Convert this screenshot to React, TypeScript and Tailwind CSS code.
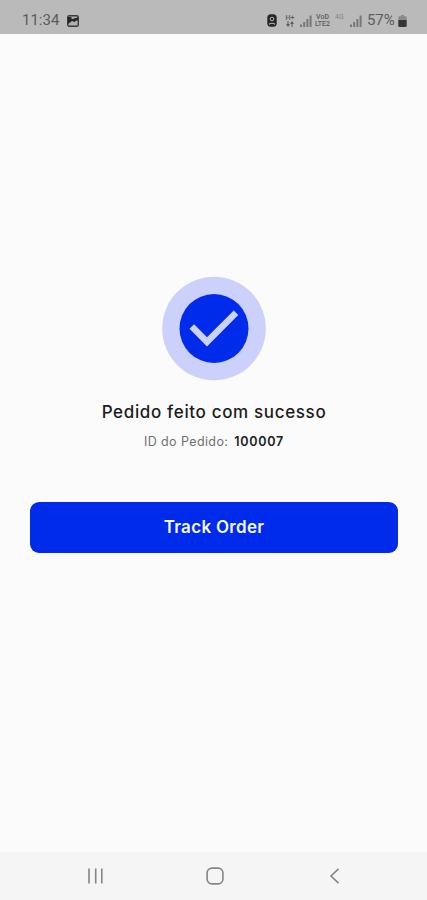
function SignalIcon() {
  return (
    <svg width="12" height="12" viewBox="0 0 12 12" fill="#787878">
      <rect x="0" y="9.5" width="2" height="2.5" />
      <rect x="3.2" y="7" width="2" height="5" />
      <rect x="6.4" y="4" width="2" height="8" />
      <rect x="9.6" y="0.5" width="2" height="11.5" />
    </svg>
  );
}

function StatusBar() {
  return (
    <header className="flex h-[34px] shrink-0 items-center bg-[#bababa] pt-[7px] pl-[22px] pr-[20px] text-[#5c5c5c]">
      <span className="w-[38px] text-[15px] leading-none whitespace-nowrap">11:34</span>
      <svg className="ml-[7px]" width="12" height="12" viewBox="0 0 12 12">
        <rect x="0.7" y="0.7" width="10.6" height="10.6" rx="1.5" fill="#b0b0b0" stroke="#3a3a3a" strokeWidth="1.4" />
        <path d="M1 2h3.5v2H6L8 3h1.5L11 2v3.5H9.5L7.5 7 5 6 1 9z" fill="#262626" />
      </svg>

      <div className="ml-auto flex items-center">
        <svg width="10" height="13" viewBox="0 0 10 13">
          <rect x="0.3" y="0.3" width="9.4" height="12.4" rx="3.5" fill="#262626" />
          <circle cx="5" cy="5" r="1.8" fill="none" stroke="#bababa" strokeWidth="1" />
          <path d="M2 10.3c1.5-1.5 4.5-1.5 6 0" fill="none" stroke="#bababa" strokeWidth="1.1" />
        </svg>
        <div className="ml-[8px] flex w-[10px] flex-col items-center">
          <span className="text-[7px] leading-[6px] font-medium">H+</span>
          <svg width="8" height="6" viewBox="0 0 8 6" fill="#5c5c5c">
            <path d="M1.5 0h1v3H4L2 6 0 3h1.5zM5.5 6h1V3H8L6 0 4 3h1.5z" />
          </svg>
        </div>
        <div className="ml-[5px]">
          <SignalIcon />
        </div>
        <div className="ml-[2px] flex w-[17px] flex-col items-center text-[7px] leading-[7px] font-medium">
          <span>VoD</span>
          <span>LTE2</span>
        </div>
        <span className="ml-[4px] w-[10px] self-start text-[7px] leading-[8px] text-[#858585]">4G</span>
        <div className="ml-[5px]">
          <SignalIcon />
        </div>
        <span className="ml-[5px] w-[30px] text-[15px] leading-none tracking-[-0.1px] whitespace-nowrap">57%</span>
        <svg className="ml-[1px]" width="9" height="12" viewBox="0 0 9 12">
          <path d="M3 0h3v1.2h1.5q1.2 0 1.2 1.2V5H.3V2.4q0-1.2 1.2-1.2H3z" fill="#8b8b8b" />
          <path d="M.3 5h8.4v5.5q0 1.5-1.5 1.5H1.8Q.3 12 .3 10.5z" fill="#353535" />
        </svg>
      </div>
    </header>
  );
}

function NavigationBar() {
  return (
    <nav className="flex h-[48px] shrink-0 items-center justify-between bg-[#f5f5f5] pl-[87px] pr-[84px]">
      <button type="button" aria-label="Recents">
        <svg width="18" height="18" viewBox="0 0 18 18" fill="none" stroke="#858585" strokeWidth="1.6">
          <path d="M2 1.5v15M8.7 1.5v15M14.8 1.5v15" />
        </svg>
      </button>
      <button type="button" aria-label="Home">
        <svg width="18" height="18" viewBox="0 0 18 18" fill="none" stroke="#858585" strokeWidth="1.6">
          <rect x="1.1" y="1.1" width="15.8" height="15.8" rx="4.8" />
        </svg>
      </button>
      <button type="button" aria-label="Back">
        <svg width="18" height="18" viewBox="0 0 18 18" fill="none" stroke="#858585" strokeWidth="1.6">
          <path d="M13.5 1.8 6 9l7.5 7.2" />
        </svg>
      </button>
    </nav>
  );
}

export default function App() {
  return (
    <div className="flex h-[900px] w-full flex-col overflow-hidden bg-[#fbfbfb] font-['Roboto',sans-serif]">
      <StatusBar />

      <main className="flex flex-1 flex-col items-center pt-[242px] pr-[29px] pl-[30px] font-['Inter',sans-serif]">
        <svg width="104" height="105" viewBox="0 0 104 105" className="shrink-0">
          <circle cx="52" cy="52.5" r="51.8" fill="#cbd1fa" />
          <circle cx="52" cy="52.5" r="34.5" fill="#002beb" />
          <path d="M29.8 50.5 45 65.8 74 36.8" fill="none" stroke="#cbd1fa" strokeWidth="6.5" />
        </svg>

        <h1 className="mt-[19px] text-[17px] leading-6 font-medium tracking-[0.65px] whitespace-nowrap text-[#1c1c1c]">
          Pedido feito com sucesso
        </h1>
        <p className="mt-[8px] flex items-center gap-[6px] text-[12.5px] leading-5 whitespace-nowrap">
          <span className="tracking-[0.4px] text-[#707070]">ID do Pedido:</span>
          <span className="font-semibold tracking-[0.75px] text-[#202020]">100007</span>
        </p>

        <button
          type="button"
          className="mt-[50px] h-[51px] w-full shrink-0 rounded-[9px] bg-[#002beb] pt-px text-[17px] font-semibold tracking-[0.3px] text-[#f4f5ff]"
        >
          Track Order
        </button>
      </main>

      <NavigationBar />
    </div>
  );
}
